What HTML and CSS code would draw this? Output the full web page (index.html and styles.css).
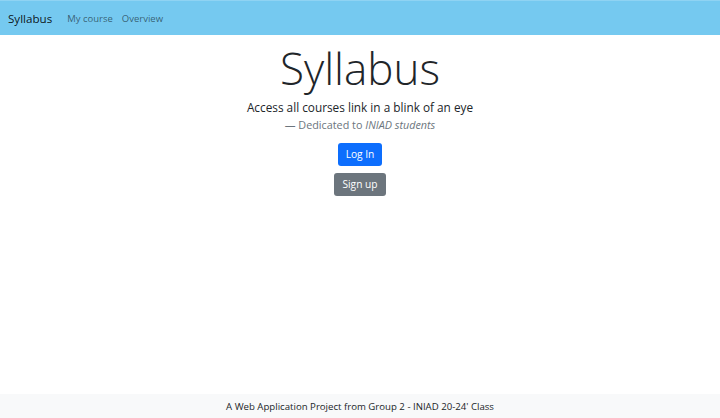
FILE: index.html
```html
<!DOCTYPE html>
<html lang="en">
<head>
<meta charset="utf-8">
<title>Syllabus</title>
<link rel="stylesheet" href="styles.css">
</head>
<body>
<nav class="navbar">
  <a class="brand" href="#">Syllabus</a>
  <a class="nav-link" href="#">My course</a>
  <a class="nav-link" href="#">Overview</a>
</nav>
<main class="hero">
  <h1 class="display">Syllabus</h1>
  <p class="lead">Access all courses link in a blink of an eye</p>
  <p class="quote-footer">— Dedicated to <cite>INIAD students</cite></p>
  <a class="btn btn-primary" href="#">Log In</a>
  <a class="btn btn-secondary" href="#">Sign up</a>
</main>
<footer class="footer">A Web Application Project from Group 2 - INIAD 20-24' Class</footer>
</body>
</html>
```
FILE: styles.css
```css
* { box-sizing: border-box; }
html, body { height: 100%; }
body {
  margin: 0;
  font-family: "Open Sans", "Noto Sans", sans-serif;
  color: #212529;
  background: #fff;
  display: flex;
  flex-direction: column;
  min-height: 100vh;
}
a { text-decoration: none; }
.navbar {
  height: 35px;
  background: #75c9f0;
  border-top: 1px solid #8fd3f3;
  display: flex;
  align-items: center;
  padding: 0 8px;
  gap: 9px;
}
.brand {
  font-size: 11.6px;
  color: rgba(0,0,0,.9);
  margin-right: 6px;
}
.nav-link {
  font-size: 9.5px;
  color: rgba(0,0,0,.55);
}
.hero {
  display: flex;
  flex-direction: column;
  align-items: center;
}
.display {
  font-weight: 300;
  font-size: 44px;
  line-height: 1.2;
  margin: 7px 0 0;
}
.lead {
  font-size: 11.8px;
  margin: 4px 0 0;
}
.quote-footer {
  font-size: 10.8px;
  color: #6c757d;
  margin: 2px 0 0;
}
.quote-footer cite { font-style: italic; }
.btn {
  display: inline-block;
  font-size: 10.2px;
  line-height: 1.5;
  padding: 4px 8px;
  border-radius: 3px;
  color: #fff;
}
.btn-primary { background: #0d6efd; margin-top: 11px; }
.btn-secondary { background: #6c757d; margin-top: 7px; }
.footer {
  margin-top: auto;
  background: #f8f9fa;
  height: 24px;
  display: flex;
  align-items: center;
  justify-content: center;
  font-size: 9.65px;
  color: #212529;
}
```
